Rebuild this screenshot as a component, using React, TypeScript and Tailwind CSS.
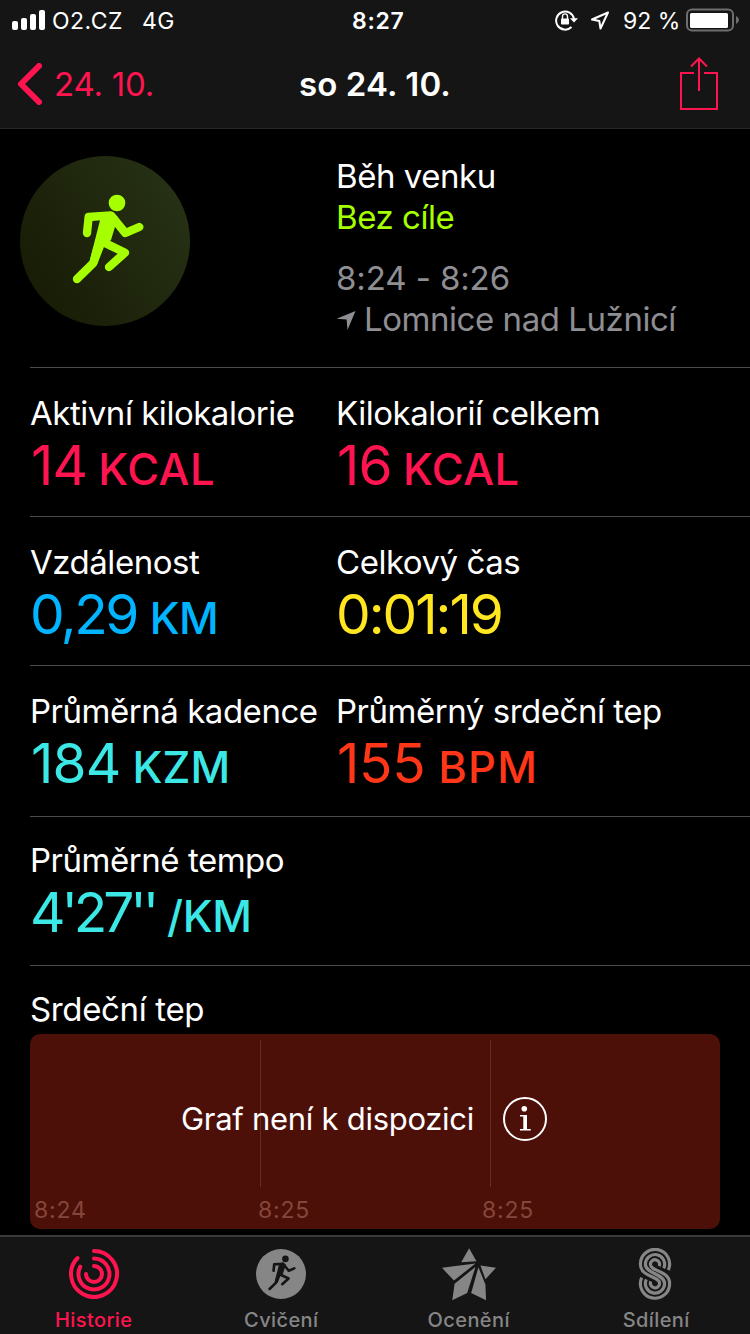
import type { ReactNode } from "react";

type Metric = {
  label: string;
  value: string;
  unit?: string;
  color: string;
  valueClass?: string;
  unitClass?: string;
};

const rows: { size: string; items: Metric[] }[] = [
  {
    size: "h-[149px] pt-6",
    items: [
      { label: "Aktivní kilokalorie", value: "14", unit: "KCAL", color: "text-[#ff1450]", valueClass: "pl-px tracking-[-0.8px]", unitClass: "ml-[11px] tracking-[0.5px]" },
      { label: "Kilokalorií celkem", value: "16", unit: "KCAL", color: "text-[#ff1450]", valueClass: "pl-px tracking-[-0.8px]", unitClass: "ml-[11px] tracking-[0.5px]" },
    ],
  },
  {
    size: "h-[149px] pt-6",
    items: [
      { label: "Vzdálenost", value: "0,29", unit: "KM", color: "text-[#00b4ff]", valueClass: "tracking-[-2.5px]", unitClass: "ml-[13px] tracking-[-0.6px]" },
      { label: "Celkový čas", value: "0:01:19", color: "text-[#ffe620]", valueClass: "tracking-[-2px]" },
    ],
  },
  {
    size: "h-[151px] pt-6",
    items: [
      { label: "Průměrná kadence", value: "184", unit: "KZM", color: "text-[#3ce8e6]", valueClass: "pl-px tracking-[-0.8px]", unitClass: "ml-3 tracking-[0.1px]" },
      { label: "Průměrný srdeční tep", value: "155", unit: "BPM", color: "text-[#ff3718]", valueClass: "pl-px tracking-[-0.3px]", unitClass: "ml-[13px] tracking-[1.2px]" },
    ],
  },
  {
    size: "h-[149px] pt-[22px]",
    items: [
      { label: "Průměrné tempo", value: "4'27''", unit: "/KM", color: "text-[#3ce8e6]", valueClass: "tracking-[-4.1px]", unitClass: "ml-3 tracking-[-0.4px]" },
    ],
  },
];

function Runner({ stroke = 25 }: { stroke?: number }) {
  return (
    <g fill="none" stroke="currentColor" strokeWidth={stroke} strokeLinecap="round" strokeLinejoin="round">
      <circle cx="321" cy="174" r="25" fill="currentColor" stroke="none" />
      <path d="M231 264L236 216L303 211L346 264L388 246" />
      <path d="M285 294L345 323L297 366" />
      <path d="M262 310L250 354L201 402" />
      <path d="M271 222L300 200L324 216L303 285L283 303L262 357L239 348Z" fill="currentColor" stroke="none" />
    </g>
  );
}

function StatusBar() {
  return (
    <div className="flex h-10 items-center pl-3 pr-[11px] text-[23px] leading-10">
      <svg width="34" height="20" viewBox="0 0 34 20" fill="#fff">
        <rect x="0" y="11" width="6" height="9" rx="2" />
        <rect x="9" y="8" width="6" height="12" rx="2" />
        <rect x="18" y="4" width="6" height="16" rx="2" />
        <rect x="27" y="0" width="6" height="20" rx="2" />
      </svg>
      <span className="ml-[6px] w-[90px] pt-px tracking-[0.5px]">O2.CZ</span>
      <span className="w-[210px] pt-px tracking-[0.5px]">4G</span>
      <span className="w-[203px] pt-px font-semibold tracking-[0.7px]">8:27</span>
      <svg className="mb-px" width="24" height="22" viewBox="0 0 24 22" fill="none" stroke="#fff" strokeWidth="2">
        <path d="M16.5 18A9 9 0 1 1 19 10" />
        <path d="M15 9.2H23L19 13.6Z" fill="#fff" stroke="none" />
        <rect x="6" y="9.6" width="8" height="6" rx="0.8" fill="#fff" stroke="none" />
        <path d="M7.5 10V7.6A2.4 2.6 0 0 1 12.5 7.6V10" strokeWidth="1.4" />
      </svg>
      <svg className="ml-[11px]" width="20" height="20" viewBox="0 0 20 20" fill="none" stroke="#fff" strokeWidth="2" strokeLinejoin="round">
        <path d="M18 2.5L2 9.5L9.3 11L10.5 18.5Z" />
      </svg>
      <span className="ml-[13px] w-[63px] whitespace-nowrap pt-px">92 %</span>
      <svg width="53" height="24" viewBox="0 0 53 24">
        <rect x="1" y="1.5" width="46" height="21" rx="5" fill="none" stroke="#6e6e6e" strokeWidth="2" />
        <rect x="4" y="5" width="38" height="15" rx="1.5" fill="#fff" />
        <path d="M50 8Q53 9.5 53 12T50 16Z" fill="#6e6e6e" />
      </svg>
    </div>
  );
}

function NavBar() {
  return (
    <div className="grid h-[88px] grid-cols-[1fr_auto_1fr] items-center px-[17px] text-[33px]">
      <div className="flex items-center gap-3 text-[#ff1450]">
        <svg width="25" height="42" viewBox="0 0 25 42" fill="none" stroke="currentColor" strokeWidth="6" strokeLinecap="round" strokeLinejoin="round">
          <path d="M22 3L4 21L22 39" />
        </svg>
        <span className="pt-[2px] tracking-[-0.2px]">24. 10.</span>
      </div>
      <h1 className="pt-[2px] font-semibold tracking-[0.1px]">so 24. 10.</h1>
      <svg className="mb-[2px] mr-[14px] justify-self-end text-[#ff1450]" width="39" height="53" viewBox="0 0 39 53" fill="none" stroke="currentColor" strokeWidth="2">
        <path d="M14 16H1V52H37V16H24M19 34V2M11 9.5L19 1.5L27 9.5" />
      </svg>
    </div>
  );
}

function MetricCell({ label, value, unit, color, valueClass = "", unitClass = "" }: Metric) {
  return (
    <div className="whitespace-nowrap">
      <div className="h-[43px] text-[33px] leading-[42px] tracking-[-0.47px]">{label}</div>
      <div className={`h-[60px] leading-[60px] ${color}`}>
        <span className={`text-[55px] ${valueClass}`}>{value}</span>
        {unit && <span className={`text-[43.5px] font-medium ${unitClass}`}>{unit}</span>}
      </div>
    </div>
  );
}

function Tab({ label, active, children }: { label: string; active?: boolean; children: ReactNode }) {
  return (
    <div className={`flex flex-1 flex-col items-center pt-[10px] ${active ? "text-[#ff1450]" : "text-[#868686]"}`}>
      <div className="flex h-[54px] items-center">{children}</div>
      <span className="mt-[7px] text-[20px] font-medium leading-6 tracking-[0.4px]">{label}</span>
    </div>
  );
}

export default function App() {
  return (
    <main className="flex h-[1334px] w-[750px] flex-col overflow-hidden bg-black font-['Inter',sans-serif] text-white">
      <header className="h-[129px] border-b border-[#282828] bg-[#151515]">
        <StatusBar />
        <NavBar />
      </header>

      <section className="flex h-[238px] pl-5 pt-[27px]">
        <svg className="text-[#a6ff00]" width="170" height="170" viewBox="30 33 510 510">
          <defs>
            <linearGradient id="badge" x1="0" y1="0.8" x2="1" y2="0.2">
              <stop offset="0" stopColor="#171b04" />
              <stop offset="1" stopColor="#273216" />
            </linearGradient>
          </defs>
          <circle cx="285" cy="288" r="255" fill="url(#badge)" />
          <Runner />
        </svg>
        <div className="ml-[146px] text-[33px] leading-[41px] tracking-[-0.45px]">
          <p>Běh venku</p>
          <p className="text-[#a6ff00]">Bez cíle</p>
          <p className="mt-5 tracking-[-0.1px] text-[#8e8e93]">8:24 - 8:26</p>
          <p className="flex items-center text-[#8e8e93]">
            <svg className="mr-2" width="20" height="20" viewBox="0 0 20 20" fill="currentColor">
              <path d="M19.5 1L0.5 8.7L10.6 9.6L11.5 20Z" />
            </svg>
            Lomnice nad Lužnicí
          </p>
        </div>
      </section>

      <div className="ml-[30px]">
        {rows.map((row) => (
          <section
            key={row.items[0].label}
            className={`grid grid-cols-[306px_1fr] border-t border-[#4c4c4c] ${row.size}`}
          >
            {row.items.map((item) => (
              <MetricCell key={item.label} {...item} />
            ))}
          </section>
        ))}
        <section className="border-t border-[#4c4c4c] pt-[22px]">
          <h2 className="h-[46px] text-[33px] leading-[42px] tracking-[-0.35px]">Srdeční tep</h2>
          <div className="relative h-[195px] w-[690px] rounded-[10px] bg-[#4c1008]">
            <div className="flex h-full pt-[6px]">
              <div className="h-[147px] w-[231px] border-r border-[#672c25]" />
              <div className="h-[147px] w-[230px] border-r border-[#672c25]" />
            </div>
            <div className="absolute inset-x-0 bottom-[3px] flex pl-1 text-[23px] leading-8 tracking-[0.8px] text-[#85463c]">
              <span className="w-[224px]">8:24</span>
              <span className="w-[224px]">8:25</span>
              <span>8:25</span>
            </div>
            <div className="absolute inset-x-0 top-[62px] flex items-center pl-[151px] text-[31px] leading-[44px]">
              <span className="w-[321px] whitespace-nowrap pb-px tracking-[-0.28px]">Graf není k dispozici</span>
              <svg width="46" height="46" viewBox="0 0 46 46" fill="none" stroke="#fff" strokeWidth="2">
                <circle cx="23" cy="23" r="21" />
                <circle cx="22.3" cy="12.8" r="2.8" fill="#fff" stroke="none" />
                <path d="M18 19H25V33H28.8V34.6H18V33H21.3V20.6H18Z" fill="#fff" stroke="none" />
              </svg>
            </div>
          </div>
        </section>
      </div>

      <nav className="mt-auto flex h-[99px] border-t-2 border-[#3a3a3a] bg-[#151515]">
        <Tab label="Historie" active>
          <svg width="50" height="50" viewBox="0 0 50 50" fill="none" stroke="currentColor" strokeWidth="4" strokeLinecap="round">
            <path d="M25 2A23 23 0 1 1 8.5 9" />
            <path d="M25 9.5A15.5 15.5 0 1 1 11.3 17.7" />
            <path d="M25 17A8 8 0 1 1 17 25" />
          </svg>
        </Tab>
        <Tab label="Cvičení">
          <svg width="50" height="50" viewBox="98 99 379 379">
            <circle cx="287.5" cy="288.5" r="189.5" fill="currentColor" />
            <g className="text-[#151515]">
              <Runner stroke={20} />
            </g>
          </svg>
        </Tab>
        <Tab label="Ocenění">
          <svg width="54" height="53" viewBox="80 41 163 158" fill="currentColor">
            <path d="M162 41L138 83L184 80Z" />
            <path d="M80 100L181 87L116 138Z" />
            <path d="M181 97L118 148L111 198L156 176Z" />
            <path d="M190 98L168 176L213 198L211 150Z" />
            <path d="M196 93L243 100L211 134Z" />
          </svg>
        </Tab>
        <Tab label="Sdílení">
          <svg className="mr-[2px]" width="34" height="52" viewBox="-1 0 34 52" fill="none" stroke="currentColor" strokeWidth="3.2">
            <path d="M29.3 22A14.6 14.6 0 1 0 1.4 16.2C1.4 29.3 20.6 27.8 20.6 35.4A4.6 4.6 0 1 1 11.8 33.4" />
            <path d="M24.7 20.2A9.6 9.6 0 1 0 6.4 16.2C6.4 25.8 25.6 25.8 25.6 35.4A9.6 9.6 0 1 1 7.3 31.4" />
            <path d="M20.2 18.2A4.6 4.6 0 1 0 11.4 16.2C11.4 23.8 30.6 22.3 30.6 35.4A14.6 14.6 0 1 1 2.7 29.6" />
          </svg>
        </Tab>
      </nav>
    </main>
  );
}
